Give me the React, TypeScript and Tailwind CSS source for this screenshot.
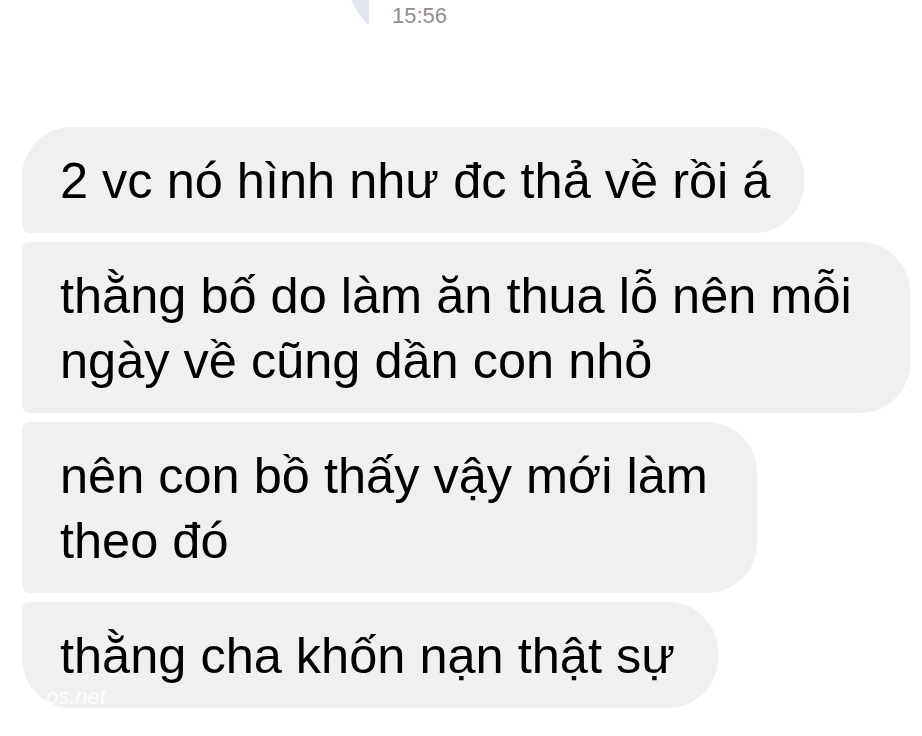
const messages = [
  {
    lines: ["2 vc nó hình như đc thả về rồi á"],
    shape: "w-[782px] rounded-tl-[50px] rounded-bl-[8px]",
  },
  {
    lines: ["thằng bố do làm ăn thua lỗ nên mỗi", "ngày về cũng dần con nhỏ"],
    shape: "w-[888px] rounded-tl-[8px] rounded-bl-[8px]",
  },
  {
    lines: ["nên con bồ thấy vậy mới làm", "theo đó"],
    shape: "w-[735px] rounded-tl-[8px] rounded-bl-[8px]",
  },
  {
    lines: ["thằng cha khốn nạn thật sự"],
    shape: "w-[696px] rounded-tl-[8px] rounded-bl-[50px]",
    watermark: true,
  },
];

export default function App() {
  return (
    <div className="w-[922px] h-[736px] bg-white overflow-hidden font-['Liberation_Sans',Arial,sans-serif]">

      {/* top: tail of previous bubble + time */}
      <div className="flex items-start h-[30px] pl-[350px]">
        <svg width="20" height="24" viewBox="0 0 20 24" className="shrink-0">
          <path d="M1 0 L19 0 L19 24 L17 24 Q8 14 1 0 Z" fill="#e2e5f0" />
        </svg>
        <span className="ml-[22px] pt-[5px] text-[22px] leading-[22px] text-[#8e8e93]">
          15:56
        </span>
      </div>

      {/* messages */}
      <div className="flex flex-col items-start gap-[9px] mt-[97px] pl-[22px]">
        {messages.map((m, i) => (
          <div
            key={i}
            className={`relative bg-[#f0f0f0] rounded-tr-[50px] rounded-br-[50px] pl-[38px] pt-[21px] pb-[20px] text-black text-[50.5px] leading-[65px] ${m.shape}`}
          >
            {m.lines.map((line, j) => (
              <div key={j} className="whitespace-nowrap">
                {line}
              </div>
            ))}
            {m.watermark && (
              <span className="absolute left-[24px] top-[86px] text-[22px] leading-[18px] italic text-white/90">
                os.net
              </span>
            )}
          </div>
        ))}
      </div>

    </div>
  );
}
